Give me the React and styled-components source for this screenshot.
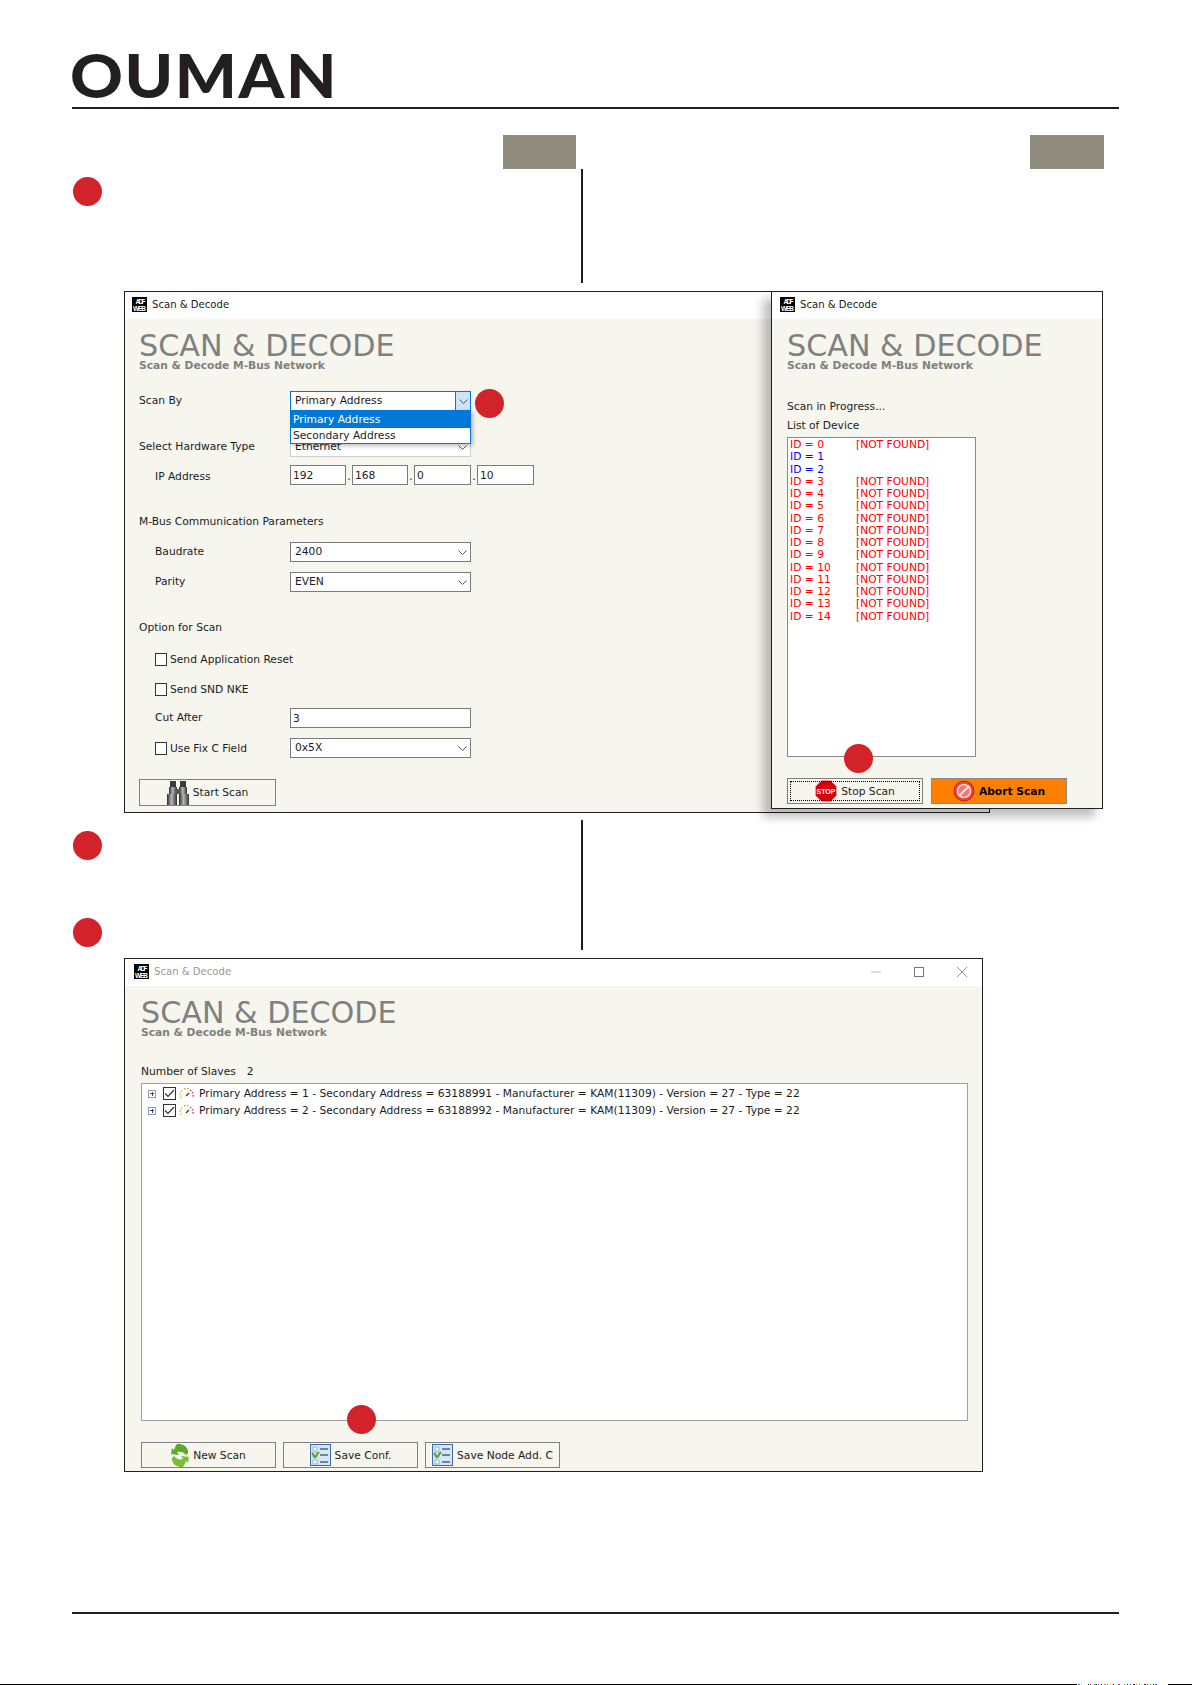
import React from "react";
import styled, { createGlobalStyle } from "styled-components";

const Global = createGlobalStyle`
  html, body { margin: 0; padding: 0; background: #fff; }
  body { font-family: "DejaVu Sans", Verdana, sans-serif; }
  * { box-sizing: border-box; }
`;

const Page = styled.div`
  width: 1192px;
  height: 1685px;
  overflow: hidden;
  background: #fff;
  color: #1c1c1c;
  font-size: 10.7px;
`;
const Content = styled.div`
  padding: 52px 73px 0 72px;
`;
const Logo = styled.div`
  font-family: Lato, sans-serif;
  font-weight: 900;
  font-size: 61px;
  line-height: 45px;
  height: 46px;
  color: #231f20;
  letter-spacing: 1.5px;
  margin-left: -2px;
  transform: scaleX(1.07);
  transform-origin: left center;
`;
const Rule = styled.div`
  height: 2px;
  background: #231f20;
  margin-top: ${(p) => p.$top}px;
`;
const TabRow = styled.div`
  display: flex;
  margin-top: 26px;
  height: 34px;
`;
const Tab = styled.div`
  width: ${(p) => p.$w}px;
  margin-left: ${(p) => p.$left}px;
  background: #918d7e;
`;
const StepRow = styled.div`
  display: flex;
  height: ${(p) => p.$h}px;
  margin-top: ${(p) => p.$top}px;
`;
const DotColumn = styled.div`
  width: 509px;
  padding-left: 1px;
`;
const Dot = styled.div`
  width: 29px;
  height: 29px;
  border-radius: 50%;
  background: #d2232a;
  margin-top: ${(p) => p.$top}px;
`;
const VLine = styled.div`
  width: 1.5px;
  background: #231f20;
`;
const WindowStage = styled.div`
  position: relative;
  margin: 8px 0 0 52px;
  height: 522px;
`;
const Window = styled.div`
  position: relative;
  width: ${(p) => p.$w}px;
  height: ${(p) => p.$h}px;
  border: 1px solid #231f20;
  background: #f6f6ee;
  display: flex;
  flex-direction: column;
`;
const FloatingWindow = styled(Window)`
  position: absolute;
  left: 647px;
  top: 0;
  box-shadow: -8px 8px 9px rgba(0, 0, 0, 0.25);
`;
const TitleBar = styled.div`
  height: 27px;
  flex: none;
  background: #fff;
  display: flex;
  align-items: center;
  gap: 5px;
  font-size: 10.1px;
  padding: 0 ${(p) => p.$pad || 7}px 2px;
  color: ${(p) => (p.$dim ? "#9a9a9a" : "#1c1c1c")};
`;
const Controls = styled.div`
  margin-left: auto;
  display: flex;
  gap: 33px;
  padding-right: 6px;
  align-items: center;
`;
const Body = styled.div`
  padding-left: ${(p) => p.$pad}px;
  flex: 1;
`;
const BigTitle = styled.div`
  font-size: 30.2px;
  line-height: 30px;
  color: #808080;
  margin: 12px 0 0 0;
  white-space: nowrap;
`;
const SubTitle = styled.div`
  font-size: 10.7px;
  line-height: 10px;
  font-weight: 700;
  color: #808080;
  white-space: nowrap;
`;
const FormRow = styled.div`
  position: relative;
  display: flex;
  align-items: center;
  height: 20px;
  margin-top: ${(p) => p.$top}px;
  white-space: nowrap;
`;
const Label = styled.div`
  width: 151px;
  padding-left: ${(p) => p.$indent || 0}px;
  padding-bottom: 1px;
`;
const Combo = styled.div`
  position: relative;
  width: 181px;
  height: 20px;
  background: #fff;
  border: 1px solid ${(p) => (p.$open ? "#0078d7" : p.$muted ? "#cfcfcf" : "#7a7a7a")};
  display: flex;
  align-items: center;
  padding: 0 0 1px 4px;
`;
const ComboArrow = styled.div`
  position: absolute;
  right: 0;
  top: 0;
  bottom: 0;
  width: 15px;
  display: flex;
  align-items: center;
  justify-content: center;
  background: ${(p) => (p.$open ? "#cce4f7" : "transparent")};
  border-left: ${(p) => (p.$open ? "1px solid #0078d7" : "none")};
`;
const DropList = styled.div`
  position: absolute;
  left: 151px;
  top: 19px;
  width: 181px;
  height: 34px;
  z-index: 2;
  background: #fff;
  border: 1px solid #0078d7;
  box-shadow: 2px 2px 4px rgba(0, 0, 0, 0.25);
`;
const DropItem = styled.div`
  height: ${(p) => (p.$active ? 17 : 15)}px;
  line-height: ${(p) => (p.$active ? 17 : 15)}px;
  padding-left: 2px;
  background: ${(p) => (p.$active ? "#0078d7" : "#fff")};
  color: ${(p) => (p.$active ? "#fff" : "#1c1c1c")};
`;
const Field = styled.div`
  width: ${(p) => p.$w}px;
  height: 20px;
  background: #fff;
  border: 1px solid #7a7a7a;
  padding-left: 2px;
  line-height: 18px;
  padding-top: 1px;
`;
const IpGroup = styled.div`
  display: flex;
`;
const IpDot = styled.div`
  width: 6px;
  text-align: center;
  line-height: 24px;
`;
const CheckLabel = styled.div`
  display: flex;
  align-items: center;
  gap: 3px;
  margin-left: 16px;
  width: 135px;
`;
const Box = styled.div`
  width: 12px;
  height: 13px;
  border: 1px solid #333;
  background: #fff;
  display: flex;
  align-items: center;
  justify-content: center;
  flex: none;
`;
const Button = styled.div`
  position: relative;
  width: ${(p) => p.$w}px;
  height: ${(p) => p.$h || 26}px;
  margin-top: ${(p) => p.$top || 0}px;
  border: 1px solid ${(p) => (p.$primary ? "#8a8a8a" : "#808080")};
  background: ${(p) => (p.$primary ? "#ff8000" : "transparent")};
  color: ${(p) => (p.$primary ? "#000" : "#1c1c1c")};
  font-weight: ${(p) => (p.$primary ? 700 : 400)};
  display: flex;
  align-items: center;
  justify-content: center;
  gap: 4px;
  white-space: nowrap;
  flex: none;
  &::before {
    content: "";
    display: ${(p) => (p.$focus ? "block" : "none")};
    position: absolute;
    inset: 2px;
    border: 1px dotted #000;
  }
`;
const Status = styled.div`
  line-height: 14px;
  margin-top: ${(p) => p.$top}px;
`;
const DeviceList = styled.div`
  width: 189px;
  height: 320px;
  margin-top: 4px;
  border: 1px solid #8a8a8a;
  background: #fff;
  padding: 1px 0 0 2px;
`;
const DeviceRow = styled.div`
  display: grid;
  grid-template-columns: 66px auto;
  height: 12.25px;
  line-height: 12px;
  color: ${(p) => (p.$found ? "#0000ff" : "#ff0000")};
`;
const ButtonRow = styled.div`
  display: flex;
  gap: ${(p) => p.$gap}px;
  margin-top: ${(p) => p.$top}px;
`;
const Marker = styled.div`
  position: absolute;
  left: ${(p) => p.$x}px;
  top: ${(p) => p.$y}px;
  width: 29px;
  height: 29px;
  border-radius: 50%;
  background: #d2232a;
  z-index: 3;
`;
const SlaveCount = styled.div`
  display: flex;
  gap: 11px;
  line-height: 14px;
  margin-top: 27px;
`;
const Tree = styled.div`
  width: 827px;
  height: 338px;
  margin-top: 4px;
  border: 1px solid #a0a0a0;
  background: #fff;
  padding: 1px 0 0 6px;
`;
const TreeRow = styled.div`
  display: flex;
  align-items: center;
  height: 17px;
  white-space: nowrap;
`;
const Expander = styled.div`
  width: 8px;
  height: 8px;
  border: 1px solid #8f9db0;
  position: relative;
  margin-right: 7px;
  background: #fff;
  &::before {
    content: "";
    position: absolute;
    left: 1px;
    right: 1px;
    top: 2.5px;
    height: 1px;
    background: #3a4a66;
  }
  &::after {
    content: "";
    position: absolute;
    top: 1px;
    bottom: 1px;
    left: 2.5px;
    width: 1px;
    background: #3a4a66;
  }
`;
const TreeBox = styled(Box)`
  width: 13px;
  height: 13px;
  margin-right: 3px;
`;
const ResultStage = styled.div`
  margin: 8px 0 0 52px;
`;
const BottomStrip = styled.div`
  display: flex;
  height: 1px;
  margin-top: 70px;
  background: #000;
`;
const StripSolid = styled.div`
  width: 1077px;
  flex: none;
`;
const StripNoise = styled.svg`
  display: block;
  background: #fff;
  flex: none;
`;
const IconSvg = styled.svg`
  flex: none;
  margin-right: ${(p) => p.$mr || 0}px;
`;

const Chevron = () => (
  <svg width="9" height="5" viewBox="0 0 9 5">
    <path d="M.5.5 4.5 4.5 8.5.5" fill="none" stroke="#555" strokeWidth="1" />
  </svg>
);
const AppIcon = () => (
  <IconSvg width="15" height="15" viewBox="0 0 15 15">
    <rect width="15" height="15" fill="#000" />
    <text x="8.5" y="6.5" fontFamily="Liberation Sans, sans-serif" fontWeight="700" fontSize="6.5" fill="#fff" textAnchor="middle" textLength="10">ADF</text>
    <text x="7.5" y="13.5" fontFamily="Liberation Sans, sans-serif" fontWeight="700" fontSize="6.5" fill="#fff" textAnchor="middle" textLength="13">WEB</text>
  </IconSvg>
);
const Binoculars = () => (
  <svg width="22" height="24" viewBox="0 0 22 24">
    <defs>
      <linearGradient id="bn" x1="0" x2="1">
        <stop offset="0" stopColor="#2a2a2a" />
        <stop offset=".45" stopColor="#b5b5b5" />
        <stop offset="1" stopColor="#333" />
      </linearGradient>
    </defs>
    <rect x="3" y="0" width="6" height="7" fill="#3a3a3a" />
    <rect x="13" y="0" width="6" height="7" fill="#3a3a3a" />
    <rect x="2" y="6" width="8" height="8" fill="url(#bn)" />
    <rect x="12" y="6" width="8" height="8" fill="url(#bn)" />
    <rect x="9" y="8" width="4" height="5" fill="#555" />
    <rect x="0" y="13" width="10" height="11" fill="url(#bn)" />
    <rect x="12" y="13" width="10" height="11" fill="url(#bn)" />
  </svg>
);
const StopIcon = () => (
  <svg width="22" height="22" viewBox="0 0 22 22">
    <path d="M6.5 0.5h9l6 6v9l-6 6h-9l-6-6v-9z" fill="#d8000f" stroke="#e99" strokeWidth="1" />
    <text x="11" y="14" fontFamily="Liberation Sans, sans-serif" fontWeight="700" fontSize="7" fill="#fff" textAnchor="middle">STOP</text>
  </svg>
);
const AbortIcon = () => (
  <svg width="22" height="22" viewBox="0 0 22 22">
    <circle cx="11" cy="11" r="10" fill="#e8443c" stroke="#c8201c" />
    <circle cx="11" cy="11" r="6.5" fill="#f07a70" stroke="#fbd6d0" strokeWidth="1.6" />
    <path d="M6 16 16 6" stroke="#fbe0dc" strokeWidth="2" />
  </svg>
);
const RefreshIcon = () => (
  <svg width="18" height="23" viewBox="0 0 18 23">
    <path d="M6 0c5-.5 10 2 11 7 .4 2-.5 3-2 4-2-3-6-4-9-3l2 3L0 10l1-6 2 2c1-3 2-5 3-6z" fill="#5fa82c" />
    <path d="M12 23C7 23.5 2 21 1 16c-.4-2 .5-3 2-4 2 3 6 4 9 3l-2-3 8 1-1 6-2-2c-1 3-2 5-3 6z" fill="#7dbd3c" />
  </svg>
);
const ChecklistIcon = () => (
  <svg width="21" height="22" viewBox="0 0 21 22">
    <rect x=".5" y=".5" width="20" height="21" fill="#d6e6f5" stroke="#3f6b9e" />
    <rect x="3" y="3" width="4" height="4" fill="#f4f8fc" stroke="#9ab5d2" />
    <rect x="3" y="9" width="4" height="4" fill="#f4f8fc" stroke="#9ab5d2" />
    <rect x="3" y="16" width="4" height="4" fill="#f4f8fc" stroke="#9ab5d2" />
    <path d="M10 5h8M10 11h8M10 18h8" stroke="#44658c" strokeWidth="1.4" />
    <path d="M2 9l3 4 4-5" fill="none" stroke="#5f9e1e" strokeWidth="2" />
  </svg>
);
const Gauge = () => (
  <IconSvg $mr={5} width="15" height="13" viewBox="0 0 15 13">
    <path d="M2 11A6 6 0 0 1 4 3" fill="none" stroke="#c8c83c" strokeWidth="1.4" strokeDasharray="1.6 1.4" />
    <path d="M5 2A6 6 0 0 1 10 2" fill="none" stroke="#e8a030" strokeWidth="1.4" strokeDasharray="1.6 1.4" />
    <path d="M11 3A6 6 0 0 1 13.5 11" fill="none" stroke="#e04040" strokeWidth="1.4" strokeDasharray="1.6 1.4" />
    <path d="M7 9 10 6" stroke="#444" strokeWidth="1.4" />
  </IconSvg>
);
const Tick = () => (
  <svg width="11" height="9" viewBox="0 0 11 9">
    <path d="M1 4.5 4 7.5 10 1" fill="none" stroke="#333" strokeWidth="1.2" />
  </svg>
);
const Speckles = () => {
  const cols = ["#00a0ff", "#ffd000", "#222", "#e02030", "#30c040", "#222", "#5050ff", "#222", "#ff8000"];
  const xs = [1, 4, 11, 13, 17, 19, 21, 24, 27, 30, 33, 36, 41, 47, 50, 53, 56, 59, 62, 64, 67, 70, 73, 76, 78];
  return (
    <StripNoise width="91" height="1" viewBox="0 0 91 1">
      {xs.map((x, i) => (
        <rect key={x} x={x} y="0" width={i % 4 === 0 ? 2 : 1} height="1" fill={cols[i % cols.length]} />
      ))}
    </StripNoise>
  );
};

const Heading = () => (
  <>
    <BigTitle>SCAN &amp; DECODE</BigTitle>
    <SubTitle>Scan &amp; Decode M-Bus Network</SubTitle>
  </>
);

const ScanForm = () => (
  <Window $w={866} $h={522}>
    <TitleBar>
      <AppIcon />
      <span>Scan &amp; Decode</span>
    </TitleBar>
    <Body $pad={14}>
      <Heading />
      <FormRow $top={20}>
        <Label>Scan By</Label>
        <Combo $open>
          Primary Address
          <ComboArrow $open><Chevron /></ComboArrow>
        </Combo>
        <DropList>
          <DropItem $active>Primary Address</DropItem>
          <DropItem>Secondary Address</DropItem>
        </DropList>
      </FormRow>
      <FormRow $top={26}>
        <Label>Select Hardware Type</Label>
        <Combo $muted>
          Ethernet
          <ComboArrow><Chevron /></ComboArrow>
        </Combo>
      </FormRow>
      <FormRow $top={10}>
        <Label $indent={16}>IP Address</Label>
        <IpGroup>
          <Field $w={56}>192</Field>
          <IpDot>.</IpDot>
          <Field $w={56}>168</Field>
          <IpDot>.</IpDot>
          <Field $w={57}>0</Field>
          <IpDot>.</IpDot>
          <Field $w={57}>10</Field>
        </IpGroup>
      </FormRow>
      <FormRow $top={25}><Label>M-Bus Communication Parameters</Label></FormRow>
      <FormRow $top={10}>
        <Label $indent={16}>Baudrate</Label>
        <Combo>2400<ComboArrow><Chevron /></ComboArrow></Combo>
      </FormRow>
      <FormRow $top={10}>
        <Label $indent={16}>Parity</Label>
        <Combo>EVEN<ComboArrow><Chevron /></ComboArrow></Combo>
      </FormRow>
      <FormRow $top={26}><Label>Option for Scan</Label></FormRow>
      <FormRow $top={11}>
        <CheckLabel><Box />Send Application Reset</CheckLabel>
      </FormRow>
      <FormRow $top={10}>
        <CheckLabel><Box />Send SND NKE</CheckLabel>
      </FormRow>
      <FormRow $top={9}>
        <Label $indent={16}>Cut After</Label>
        <Field $w={181}>3</Field>
      </FormRow>
      <FormRow $top={10}>
        <CheckLabel><Box />Use Fix C Field</CheckLabel>
        <Combo>0x5X<ComboArrow><Chevron /></ComboArrow></Combo>
      </FormRow>
      <Button $w={137} $h={27} $top={21}><Binoculars />Start Scan</Button>
    </Body>
    <Marker $x={350} $y={97} />
  </Window>
);

const devices = Array.from({ length: 15 }, (_, id) => ({ id, found: id === 1 || id === 2 }));

const ProgressWindow = () => (
  <FloatingWindow $w={332} $h={518}>
    <TitleBar $pad={8}>
      <AppIcon />
      <span>Scan &amp; Decode</span>
    </TitleBar>
    <Body $pad={15}>
      <Heading />
      <Status $top={29}>Scan in Progress...</Status>
      <Status $top={5}>List of Device</Status>
      <DeviceList>
        {devices.map((d) => (
          <DeviceRow key={d.id} $found={d.found}>
            <span>ID = {d.id}</span>
            <span>{d.found ? "" : "[NOT FOUND]"}</span>
          </DeviceRow>
        ))}
      </DeviceList>
      <ButtonRow $gap={8} $top={21}>
        <Button $w={136} $focus><StopIcon />Stop Scan</Button>
        <Button $w={136} $primary><AbortIcon />Abort Scan</Button>
      </ButtonRow>
    </Body>
    <Marker $x={72} $y={452} />
  </FloatingWindow>
);

const slaves = [
  "Primary Address = 1 - Secondary Address = 63188991 - Manufacturer = KAM(11309) - Version = 27 - Type = 22",
  "Primary Address = 2 - Secondary Address = 63188992 - Manufacturer = KAM(11309) - Version = 27 - Type = 22",
];

const ResultWindow = () => (
  <Window $w={859} $h={514}>
    <TitleBar $pad={9} $dim>
      <AppIcon />
      <span>Scan &amp; Decode</span>
      <Controls>
        <svg width="10" height="10" viewBox="0 0 10 10"><path d="M0 5h10" stroke="#b5b5b5" /></svg>
        <svg width="10" height="10" viewBox="0 0 10 10"><rect x=".5" y=".5" width="9" height="9" fill="none" stroke="#777" /></svg>
        <svg width="10" height="10" viewBox="0 0 10 10"><path d="M0 0l10 10M10 0 0 10" stroke="#777" strokeWidth=".8" /></svg>
      </Controls>
    </TitleBar>
    <Body $pad={16}>
      <Heading />
      <SlaveCount>
        <span>Number of Slaves</span>
        <span>2</span>
      </SlaveCount>
      <Tree>
        {slaves.map((s) => (
          <TreeRow key={s}>
            <Expander />
            <TreeBox><Tick /></TreeBox>
            <Gauge />
            {s}
          </TreeRow>
        ))}
      </Tree>
      <ButtonRow $gap={7} $top={21}>
        <Button $w={135}><RefreshIcon />New Scan</Button>
        <Button $w={135}><ChecklistIcon />Save Conf.</Button>
        <Button $w={135}><ChecklistIcon />Save Node Add. C</Button>
      </ButtonRow>
    </Body>
    <Marker $x={222} $y={446} />
  </Window>
);

export default function App() {
  return (
    <Page>
      <Global />
      <Content>
        <Logo>OUMAN</Logo>
        <Rule $top={9} />
        <TabRow>
          <Tab $left={431} $w={73} />
          <Tab $left={454} $w={74} />
        </TabRow>
        <StepRow $h={114} $top={0}>
          <DotColumn><Dot $top={8} /></DotColumn>
          <VLine />
        </StepRow>
        <WindowStage>
          <ScanForm />
          <ProgressWindow />
        </WindowStage>
        <StepRow $h={130} $top={7}>
          <DotColumn>
            <Dot $top={11} />
            <Dot $top={58} />
          </DotColumn>
          <VLine />
        </StepRow>
        <ResultStage>
          <ResultWindow />
        </ResultStage>
        <Rule $top={140} />
      </Content>
      <BottomStrip>
        <StripSolid />
        <Speckles />
      </BottomStrip>
    </Page>
  );
}
